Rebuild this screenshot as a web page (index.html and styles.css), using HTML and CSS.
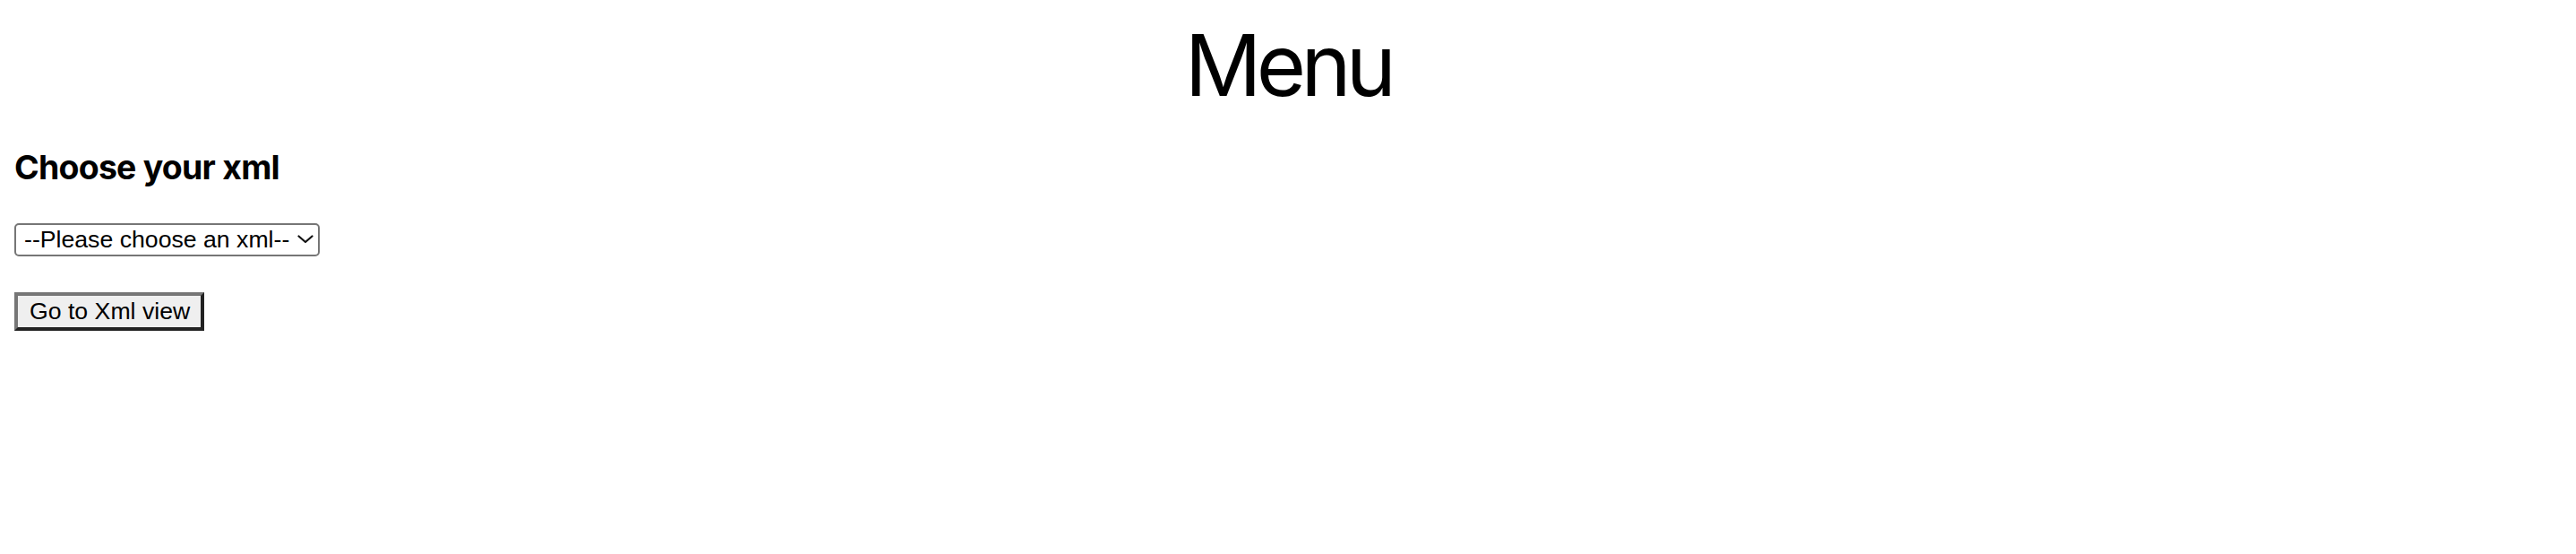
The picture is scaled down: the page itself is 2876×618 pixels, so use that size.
FILE: index.html
```html
<!DOCTYPE html>
<html lang="en">
<head>
<meta charset="utf-8">
<title>Menu</title>
<link rel="stylesheet" href="styles.css">
</head>
<body>
<main class="page">
  <h1 class="title">Menu</h1>
  <h3 class="subtitle">Choose your xml</h3>
  <form class="form">
    <div class="select-wrap">
      <select class="select">
        <option>--Please choose an xml--</option>
      </select>
      <svg class="chevron" width="18" height="10" viewBox="0 0 18 10"><path d="M1.5 1.5 L9 8 L16.5 1.5" fill="none" stroke="#111" stroke-width="2.2" stroke-linecap="round" stroke-linejoin="round"/></svg>
    </div>
    <button type="button" class="btn">Go to Xml view</button>
  </form>
</main>
</body>
</html>
```
FILE: styles.css
```css
html, body {
  margin: 0;
  padding: 0;
  background: #fff;
  color: #000;
}
.page {
  display: flex;
  flex-direction: column;
  align-items: flex-start;
  padding: 25px 16px 0 16px;
  font-family: Inter, "Liberation Sans", sans-serif;
}
.title {
  align-self: stretch;
  margin: 0;
  text-align: center;
  font-size: 95px;
  font-weight: 400;
  line-height: 96px;
  letter-spacing: -0.06em;
}
.subtitle {
  margin: 47px 0 0 0;
  font-size: 37.44px;
  font-weight: 700;
  line-height: 37px;
  letter-spacing: -0.02em;
}
.form {
  display: flex;
  flex-direction: column;
  align-items: flex-start;
  gap: 40px;
  margin-top: 44px;
}
.select-wrap {
  position: relative;
  display: flex;
}
.select {
  appearance: none;
  -webkit-appearance: none;
  width: 341px;
  height: 37px;
  box-sizing: border-box;
  margin: 0;
  padding: 0 0 0 9px;
  border: 2px solid #767676;
  border-radius: 5px;
  background: #fff;
  color: #000;
  font-family: "Liberation Sans", Arial, sans-serif;
  font-size: 26.67px;
  line-height: 33px;
}
.chevron {
  position: absolute;
  right: 7px;
  top: 13px;
  pointer-events: none;
}
.btn {
  margin: 0;
  height: 43px;
  box-sizing: border-box;
  padding: 0 12px 0 13px;
  border-style: solid;
  border-width: 4px;
  border-color: #767676 #222 #222 #767676;
  background: #efefef;
  color: #000;
  font-family: "Liberation Sans", Arial, sans-serif;
  font-size: 26.67px;
  line-height: 35px;
}
```
